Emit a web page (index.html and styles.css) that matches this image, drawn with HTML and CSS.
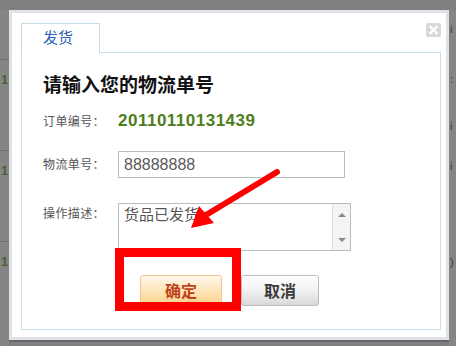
FILE: index.html
```html
<!DOCTYPE html>
<html lang="zh-CN">
<head>
<meta charset="utf-8">
<title>发货</title>
<link rel="stylesheet" href="styles.css">
</head>
<body>
<div class="backdrop">
  <div class="strip strip-left">
    <div class="bg-row"><span class="bg-num">1</span></div>
    <div class="bg-row"><span class="bg-num">1</span></div>
    <div class="bg-row"><span class="bg-num">1</span></div>
  </div>
  <div class="dialog">
    <a class="close" href="#" aria-label="关闭">
      <svg width="15" height="14" viewBox="0 0 15 14"><path d="M4.5 4 L10.5 10 M10.5 4 L4.5 10" stroke="#fff" stroke-width="2.4" stroke-linecap="square"/></svg>
    </a>
    <div class="tabs"><div class="tab">发货</div></div>
    <div class="panel">
      <h1 class="title">请输入您的物流单号</h1>
      <div class="field field-order">
        <span class="label">订单编号：</span>
        <span class="order-no">20110110131439</span>
      </div>
      <div class="field field-input">
        <span class="label">物流单号：</span>
        <div class="input">88888888</div>
      </div>
      <div class="field field-area">
        <span class="label label-top">操作描述：</span>
        <div class="textarea">
          <div class="ta-text">货品已发货</div>
          <div class="scrollbar">
            <span class="arr arr-up"></span>
            <span class="arr arr-down"></span>
          </div>
        </div>
      </div>
      <div class="actions">
        <button class="btn btn-ok">确定</button>
        <button class="btn btn-cancel">取消</button>
      </div>
    </div>
  </div>
  <div class="strip strip-right">
    <div class="r-frag r1">i</div>
    <div class="r-frag r2">:</div>
    <div class="r-frag r3">i</div>
    <div class="r-frag r4">i</div>
    <div class="r-frag r5">)</div>
  </div>
</div>
<div class="highlight-box"></div>
<svg class="arrow" width="456" height="346" viewBox="0 0 456 346">
  <line x1="277" y1="172" x2="206" y2="215" stroke="#f00" stroke-width="6" stroke-linecap="round"/>
  <polygon points="191,228 199,206 214,223" fill="#f00"/>
</svg>
</body>
</html>
```
FILE: styles.css
```css
* { box-sizing: border-box; }
html, body {
  margin: 0;
  padding: 0;
  width: 456px;
  height: 346px;
  overflow: hidden;
}
body {
  background: #7f7f7f;
  font-family: "Liberation Sans", "Noto Sans CJK SC", sans-serif;
  position: relative;
}
.backdrop {
  display: flex;
  align-items: flex-start;
  padding-top: 10px;
  height: 346px;
}
.strip {
  height: 336px;
  overflow: hidden;
  background: #858585;
}
.strip-left {
  width: 9px;
  padding-top: 49px;
}
.bg-row {
  height: 91px;
  border-top: 1px solid #6e6e6e;
  position: relative;
}
.bg-num {
  position: absolute;
  right: 1px;
  top: 13px;
  font-size: 12px;
  font-weight: bold;
  color: #46602e;
}
.strip-right {
  width: 7px;
  position: relative;
}
.r-frag {
  position: absolute;
  left: 1px;
  font-size: 11px;
  color: #3a3a3a;
}
.r1 { top: 13px; }
.r2 { top: 63px; }
.r3 { top: 110px; }
.r4 { top: 150px; }
.r5 { top: 246px; }

.dialog {
  position: relative;
  width: 440px;
  height: 330px;
  background: #fff;
  border: 3px solid #dfe3e7;
  padding: 10px 5px 7px 9px;
  display: flex;
  flex-direction: column;
  box-shadow: 0 2px 0 #666;
}
.close {
  position: absolute;
  left: 414px;
  top: 10px;
  width: 15px;
  height: 14px;
  background: #d6d9db;
  border-radius: 2px;
  display: block;
}
.close svg { display: block; }
.tabs {
  display: flex;
  height: 30px;
  margin-bottom: -1px;
  position: relative;
  z-index: 1;
}
.tab {
  width: 79px;
  height: 30px;
  border: 1px solid #c6dce7;
  border-bottom: 0;
  background: #fff;
  color: #2b5fb5;
  font-size: 15px;
  line-height: 28px;
  padding-left: 21px;
}
.panel {
  flex: 1;
  border: 1px solid #cbe0ea;
  padding: 21px 0 0 21px;
}
.title {
  margin: 0;
  font-size: 19px;
  line-height: 24px;
  font-weight: bold;
  color: #111;
}
.field {
  display: flex;
  align-items: center;
}
.label {
  width: 75px;
  flex: none;
  font-size: 12px;
  color: #555;
  line-height: 16px;
  letter-spacing: 0.4px;
}
.field-order {
  margin-top: 14px;
  height: 20px;
}
.order-no {
  font-size: 17px;
  font-weight: bold;
  color: #4e7d1c;
  line-height: 20px;
  margin-top: -2px;
  letter-spacing: 0.5px;
}
.field-input {
  margin-top: 19px;
}
.input {
  width: 227px;
  height: 27px;
  border: 1px solid #b7bec3;
  font-size: 16px;
  line-height: 25px;
  color: #5a5a5a;
  padding-left: 5px;
}
.field-area {
  margin-top: 25px;
  align-items: flex-start;
}
.label-top {
  padding-top: 3px;
}
.textarea {
  width: 233px;
  height: 48px;
  border: 1px solid #b7bec3;
  display: flex;
}
.ta-text {
  flex: 1;
  font-size: 15px;
  line-height: 20px;
  color: #555;
  padding: 1px 0 0 5px;
}
.scrollbar {
  width: 18px;
  background: #f4f4f4;
  border-left: 1px solid #e0e0e0;
  position: relative;
}
.arr {
  position: absolute;
  left: 5px;
  width: 0;
  height: 0;
  border-left: 4px solid transparent;
  border-right: 4px solid transparent;
}
.arr-up {
  top: 9px;
  border-bottom: 4px solid #8a8a8a;
}
.arr-down {
  bottom: 8px;
  border-top: 4px solid #8a8a8a;
}
.actions {
  margin-top: 24px;
  margin-left: 97px;
  display: flex;
  gap: 19px;
}
.btn {
  height: 31px;
  border-radius: 3px;
  font-family: "Noto Sans CJK SC", "Liberation Sans", sans-serif;
  font-size: 16px;
  font-weight: bold;
  padding: 0;
  line-height: 29px;
}
.btn-ok {
  width: 82px;
  border: 1px solid #f1c58f;
  background: linear-gradient(#fff8ec, #fde3b4 55%, #fbd38e);
  color: #c0421a;
}
.btn-cancel {
  width: 78px;
  border: 1px solid #bdbdbd;
  background: linear-gradient(#ffffff, #f1f1f1 50%, #d9d9d9);
  color: #3a3a3a;
}
.highlight-box {
  position: absolute;
  left: 115px;
  top: 248px;
  width: 126px;
  height: 63px;
  border: 9px solid #ff0000;
}
.arrow {
  position: absolute;
  left: 0;
  top: 0;
  pointer-events: none;
}
```
